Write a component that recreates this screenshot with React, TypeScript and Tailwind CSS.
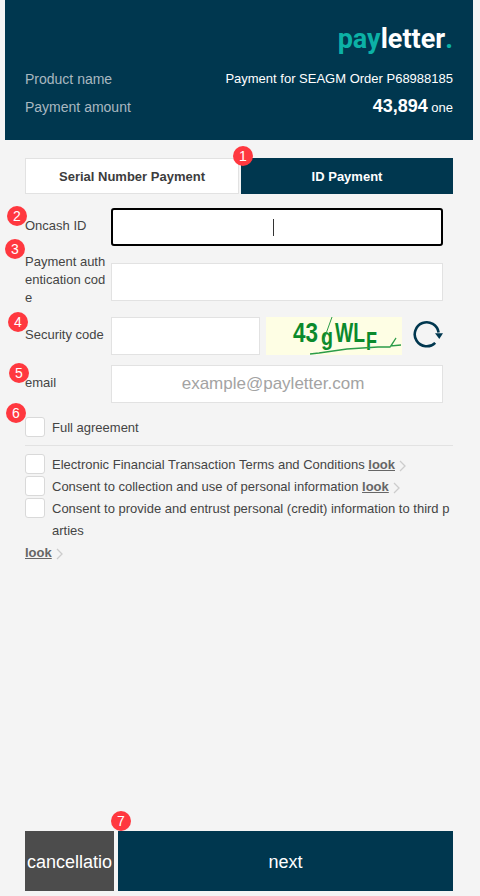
import React from "react";

function Badge({ n, className }: { n: number; className: string }) {
  return (
    <span className={"absolute flex h-5 w-5 items-center justify-center rounded-full bg-[#ff383f] text-[14px] leading-none text-white " + className}>
      {n}
    </span>
  );
}

function Chevron() {
  return (
    <svg width="7" height="12" viewBox="0 0 7 12" className="ml-1 inline-block align-[-3px]" fill="none" stroke="#cccccc" strokeWidth="1.3">
      <path d="M1 1l5 5-5 5" />
    </svg>
  );
}

function Look() {
  return (
    <>
      {" "}
      <a className="font-bold text-[#666666] underline">look</a>
      <Chevron />
    </>
  );
}

function Box() {
  return <span className="h-5 w-5 shrink-0 rounded-[3px] border border-[#d9d9d9] bg-white" />;
}

const fieldInput = "h-[38px] border border-[#e2e2e2] bg-white text-center text-[17px] outline-none placeholder:text-[#a3a3a3]";

export default function App() {
  return (
    <div className="relative flex h-[896px] w-[480px] flex-col overflow-hidden bg-[#f4f4f4] font-['Liberation_Sans',Arial,sans-serif] text-[13px] text-[#444444]">
      <header className="ml-[5px] mr-[7px] flex h-[140px] shrink-0 flex-col bg-[#00374f] px-5 pt-[26px] text-white">
        <div className="flex h-[26px] justify-end font-['Roboto',sans-serif] text-[27px] leading-[26px] font-bold">
          <span className="text-[#0cb1a6]">pay</span>
          <span>letter</span>
          <span className="text-[#0cb1a6]">.</span>
        </div>
        <div className="mt-[17px] flex h-5 items-center justify-between text-[14px] leading-5">
          <span className="text-[#a9b8c0]">Product name</span>
          <span className="text-[13px]">Payment for SEAGM Order P68988185</span>
        </div>
        <div className="mt-2 flex h-5 items-center justify-between text-[14px] leading-5">
          <span className="text-[#a9b8c0]">Payment amount</span>
          <span className="text-[13px]">
            <b className="text-[18px]">43,894</b> one
          </span>
        </div>
      </header>

      <main className="flex min-h-0 flex-1 flex-col pb-[5px] pl-[25px] pr-[27px] pt-[18px]">
        <div className="flex h-9 shrink-0 gap-[2px]">
          <div className="flex w-[214px] items-center justify-center border border-[#e2e2e2] bg-white pt-[2px] text-[13px] font-bold text-[#3c3c3c]">
            Serial Number Payment
          </div>
          <div className="flex w-[212px] items-center justify-center bg-[#00374f] pt-[2px] text-[13px] font-bold text-white">
            ID Payment
          </div>
        </div>

        <div className="mt-[14px] flex h-[38px] w-[418px] items-start">
          <label className="mt-[9px] w-[86px] shrink-0 leading-[18px]">Oncash ID</label>
          <div className="relative h-[38px] flex-1 rounded-[3px] border-2 border-black bg-white">
            <span className="absolute left-[160px] top-[9px] h-[17px] w-px bg-[#333333]" />
          </div>
        </div>

        <div className="mt-[17px] flex h-[38px] w-[418px] items-start">
          <label className="-mt-[10px] w-[82px] shrink-0 break-all leading-[18px]">Payment authentication code</label>
          <input className={fieldInput + " ml-1 min-w-0 flex-1"} />
        </div>

        <div className="mt-4 flex h-[38px] w-[418px] items-start">
          <label className="mt-[9px] w-[86px] shrink-0 leading-[18px]">Security code</label>
          <input className={fieldInput + " w-[149px]"} />
          <svg className="ml-[6px] bg-[#fefee4]" width="136" height="38" viewBox="0 0 136 38">
            <g fill="#0b8a2c" fontFamily="Liberation Sans, sans-serif" fontWeight="700">
              <text x="27" y="25" fontSize="28" textLength="25" lengthAdjust="spacingAndGlyphs">43</text>
              <text x="55" y="28" fontSize="24" textLength="12" lengthAdjust="spacingAndGlyphs">g</text>
              <text x="69" y="25" fontSize="27" textLength="30" lengthAdjust="spacingAndGlyphs">WL</text>
              <text x="100" y="33" fontSize="26" textLength="11" lengthAdjust="spacingAndGlyphs">F</text>
            </g>
            <path d="M44 37l9-1 28-4 31-2 12 0 6-9-5 8 10-1" fill="none" stroke="#2b9c48" strokeWidth="1.3" />
            <path d="M66 0l-9 25" fill="none" stroke="#2b9c48" strokeWidth="1" />
          </svg>
          <svg className="ml-[11px] mt-[3px]" width="30" height="30" viewBox="0 0 30 30" fill="none">
            <path d="M22.2 22.8A12 12 0 1 1 25.6 12.5" stroke="#00374f" strokeWidth="2.6" />
            <path d="M22 13.2h8l-3.7 5.8z" fill="#00374f" />
          </svg>
        </div>

        <div className="mt-[10px] flex h-[38px] w-[418px] items-start">
          <label className="mt-[9px] w-[86px] shrink-0 leading-[18px]">email</label>
          <input className={fieldInput + " min-w-0 flex-1 pr-2"} placeholder="example@payletter.com" />
        </div>

        <div className="mt-[14px] flex h-5 w-[428px] items-center gap-[7px]">
          <Box />
          <span className="pt-[2px]">Full agreement</span>
        </div>
        <div className="mt-2 h-px w-[428px] bg-[#e2e2e2]" />

        <div className="mt-2 w-[428px]">
          <div className="flex h-[22px] items-start gap-[7px]">
            <Box />
            <span className="whitespace-nowrap leading-[22px]">
              Electronic Financial Transaction Terms and Conditions<Look />
            </span>
          </div>
          <div className="flex h-[22px] items-start gap-[7px]">
            <Box />
            <span className="whitespace-nowrap leading-[22px]">
              Consent to collection and use of personal information<Look />
            </span>
          </div>
          <div className="flex items-start gap-[7px]">
            <Box />
            <span className="min-w-0 flex-1 break-all leading-[22px]">
              Consent to provide and entrust personal (credit) information to third parties
            </span>
          </div>
          <div className="leading-[22px]">
            <Look />
          </div>
        </div>

        <div className="mt-auto flex h-[60px] w-[428px] shrink-0 gap-1">
          <button className="h-[60px] w-[89px] shrink-0 overflow-hidden break-all bg-[#4c4c4c] text-center text-[18px] leading-[62px] text-white">
            cancellation
          </button>
          <button className="h-[60px] flex-1 bg-[#00374f] pt-[2px] text-[18px] text-white">next</button>
        </div>
      </main>

      <Badge n={1} className="left-[233px] top-[146px]" />
      <Badge n={2} className="left-[7px] top-[206px]" />
      <Badge n={3} className="left-[5px] top-[239px]" />
      <Badge n={4} className="left-[8px] top-[312px]" />
      <Badge n={5} className="left-[9px] top-[363px]" />
      <Badge n={6} className="left-[6px] top-[403px]" />
      <Badge n={7} className="left-[111px] top-[811px]" />
    </div>
  );
}
